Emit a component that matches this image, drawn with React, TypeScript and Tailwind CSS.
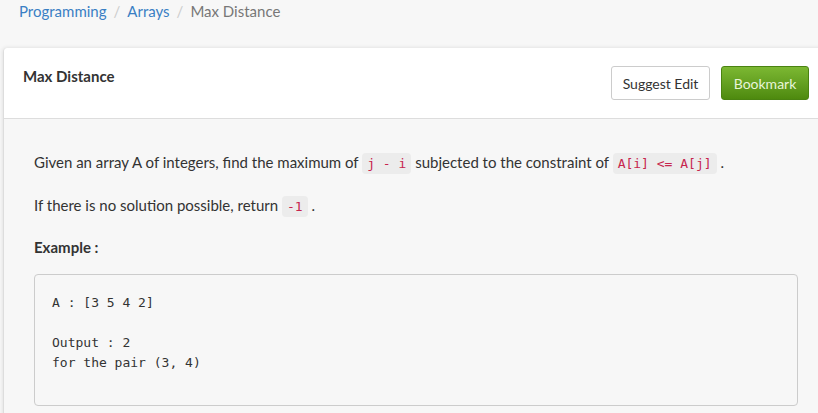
export default function App() {
  const sans = "font-['Lato','Liberation_Sans',sans-serif]";
  const mono = "font-['DejaVu_Sans_Mono','Liberation_Mono',monospace]";

  function Code({ children }: { children: React.ReactNode }) {
    return (
      <code className={`${mono} rounded-[4px] bg-[#ececec] px-[5px] py-[3px] text-[13px] leading-none text-[#c7254e]`}>
        {children}
      </code>
    );
  }

  return (
    <div className={`${sans} h-[413px] w-[818px] overflow-hidden bg-[#f7f7f7] text-[#333]`}>
      <nav className="flex h-[48px] items-start gap-[7px] pl-[19px] text-[15px] leading-[22px]">
        <span className="text-[#3a7fc4]">Programming</span>
        <span className="text-[#ccc]">/</span>
        <span className="text-[#3a7fc4]">Arrays</span>
        <span className="text-[#ccc]">/</span>
        <span className="text-[#777]">Max Distance</span>
      </nav>

      <section className="ml-[3px] w-[825px] rounded-tl-[4px] border-l border-[#ddd] shadow-[0_0_4px_rgba(0,0,0,0.12)]">
        <header className="flex h-[71px] items-start justify-between rounded-tl-[4px] border-b border-[#ddd] bg-white pl-[19px] pr-[19px]">
          <h1 className="pt-[17px] text-[15px] font-bold text-[#333]">Max Distance</h1>
          <div className="flex gap-[11px] pt-[18px]">
            <button className="h-[34px] w-[99px] rounded-[3px] border border-[#ccc] bg-white text-[14px] text-[#333]">
              Suggest Edit
            </button>
            <button className="h-[34px] w-[88px] rounded-[3px] border border-[#4a8311] bg-linear-to-b from-[#7cb832] to-[#4e8a0e] text-[14px] text-[#e8f5d8]">
              Bookmark
            </button>
          </div>
        </header>

        <div className="bg-[#f7f7f7] px-[30px] pt-[32px] pb-[20px] text-[15px]">
          <p className="leading-[22px]">
            Given an array A of integers, find the maximum of <Code>j - i</Code> subjected to the constraint of{" "}
            <Code>A[i] &lt;= A[j]</Code> .
          </p>
          <p className="mt-[21px] leading-[22px]">
            If there is no solution possible, return <Code>-1</Code> .
          </p>
          <p className="mt-[20px] leading-[22px] font-bold">Example :</p>
          <pre className={`${mono} mt-[16px] h-[132px] rounded-[4px] border border-[#ccc] bg-[#f7f7f7] px-[17px] pt-[18px] text-[13px] leading-[20px] text-[#333]`}>
{`A : [3 5 4 2]

Output : 2
for the pair (3, 4)`}
          </pre>
        </div>
      </section>
    </div>
  );
}
